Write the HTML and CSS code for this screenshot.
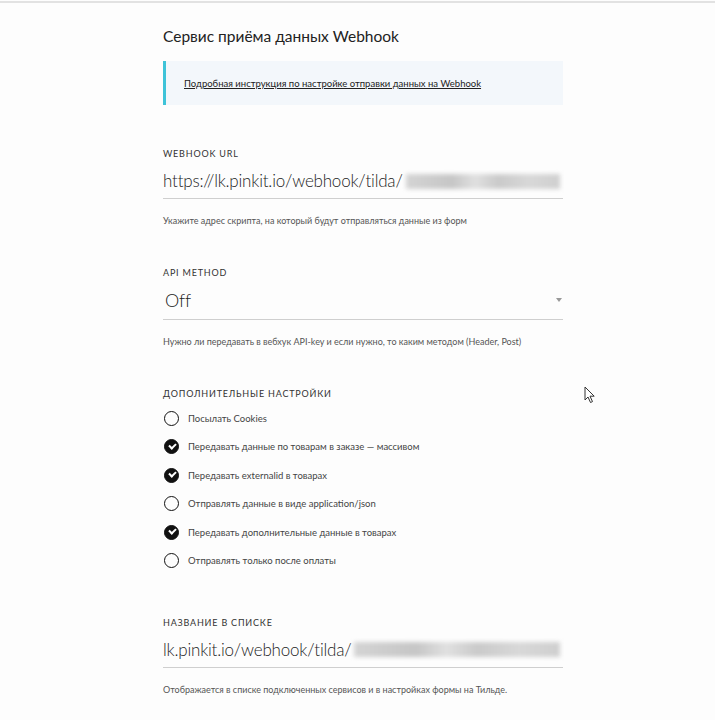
FILE: index.html
```html
<!DOCTYPE html>
<html lang="ru">
<head>
    <meta charset="UTF-8">
    <meta name="viewport" content="width=device-width, initial-scale=1.0">
    <title>Webhook</title>
    <link rel="stylesheet" href="styles.css">
</head>
<body>

<div class="topbar"></div>

<div class="page">
    <h1 class="title">Сервис приёма данных Webhook</h1>

    <div class="note">
        <a href="#" class="note-link">Подробная инструкция по настройке отправки данных на Webhook</a>
    </div>

    <div class="field">
        <div class="label">Webhook URL</div>
        <div class="input">https://lk.pinkit.io/webhook/tilda/<span class="hidden-part"></span></div>
        <div class="hint">Укажите адрес скрипта, на который будут отправляться данные из форм</div>
    </div>

    <div class="field">
        <div class="label">API method</div>
        <div class="input select">
            <span>Off</span>
            <span class="arrow"></span>
        </div>
        <div class="hint">Нужно ли передавать в вебхук API-key и если нужно, то каким методом (Header, Post)</div>
    </div>

    <div class="field">
        <div class="label">Дополнительные настройки</div>
        <div class="options">
            <div class="option"><span class="check"></span>Посылать Cookies</div>
            <div class="option"><span class="check on"></span>Передавать данные по товарам в заказе — массивом</div>
            <div class="option"><span class="check on"></span>Передавать externalid в товарах</div>
            <div class="option"><span class="check"></span>Отправлять данные в виде application/json</div>
            <div class="option"><span class="check on"></span>Передавать дополнительные данные в товарах</div>
            <div class="option"><span class="check"></span>Отправлять только после оплаты</div>
        </div>
    </div>

    <div class="field last">
        <div class="label">Название в списке</div>
        <div class="input">lk.pinkit.io/webhook/tilda/<span class="hidden-part"></span></div>
        <div class="hint">Отображается в списке подключенных сервисов и в настройках формы на Тильде.</div>
    </div>
</div>

<svg class="cursor" width="12" height="18" viewBox="0 0 12 18">
    <path d="M1 1 L1 14 L4 11 L6.5 16.5 L8.5 15.6 L6 10.2 L10.2 10.2 Z" fill="#fff" stroke="#333" stroke-width="1"/>
</svg>

</body>
</html>
```

FILE: styles.css
```css
body {
    margin: 0;
    background-color: #fdfdfd;
    font-family: Lato, "Open Sans", sans-serif;
    color: #222;
}

.topbar {
    height: 1px;
    border-bottom: 2px solid #e2e2e2;
}

.page {
    width: 400px;
    margin-left: 163px;
}

.title {
    margin: 23px 0 0;
    font-size: 15.5px;
    line-height: 20px;
    font-weight: 400;
    color: #222;
}

.note {
    margin-top: 15px;
    height: 44px;
    display: flex;
    align-items: center;
    padding-left: 18px;
    border-left: 3px solid #3ec3d8;
    background-color: #f3f7fb;
}

.note-link {
    font-size: 9.5px;
    color: #222;
}

.field {
    margin-top: 43px;
}

.field + .field {
    margin-top: 40px;
}

.field.last {
    margin-top: 49px;
}

.label {
    font-size: 9px;
    line-height: 12px;
    letter-spacing: 0.8px;
    text-transform: uppercase;
    color: #333;
}

.input {
    display: flex;
    align-items: center;
    margin-top: 9px;
    padding-bottom: 5px;
    border-bottom: 1px solid #cfcfcf;
    font-size: 17px;
    line-height: 24px;
    letter-spacing: -0.2px;
    font-weight: 300;
    color: #1e1e1e;
}

.select {
    justify-content: space-between;
    padding-bottom: 7px;
    padding-left: 2px;
    font-size: 18px;
}

.arrow {
    margin-right: 1px;
    border-left: 3px solid transparent;
    border-right: 3px solid transparent;
    border-top: 4px solid #999;
}

.hidden-part {
    flex: 1;
    height: 15px;
    margin: 0 3px 0 3px;
    background: linear-gradient(90deg, #d4d4d4, #c6c6c6 30%, #e0e0e0 45%, #cacaca 60%, #d8d8d8 80%, #cfcfcf);
    filter: blur(2px);
}

.hint {
    margin-top: 16px;
    font-size: 9px;
    line-height: 12px;
    color: #555;
}

.options {
    display: flex;
    flex-direction: column;
    gap: 14.6px;
    margin-top: 11px;
}

.option {
    display: flex;
    align-items: center;
    height: 14px;
    font-size: 9.5px;
    color: #444;
}

.check {
    position: relative;
    box-sizing: border-box;
    width: 15px;
    height: 15px;
    margin: 0 9px 0 1px;
    border: 1.5px solid #111;
    border-radius: 50%;
}

.check.on {
    background-color: #111;
}

.check.on::after {
    content: "";
    position: absolute;
    left: 3.5px;
    top: 2.5px;
    width: 5px;
    height: 3px;
    border-left: 2px solid #fff;
    border-bottom: 2px solid #fff;
    transform: rotate(-45deg);
}

.cursor {
    position: absolute;
    left: 584px;
    top: 386px;
}
```
